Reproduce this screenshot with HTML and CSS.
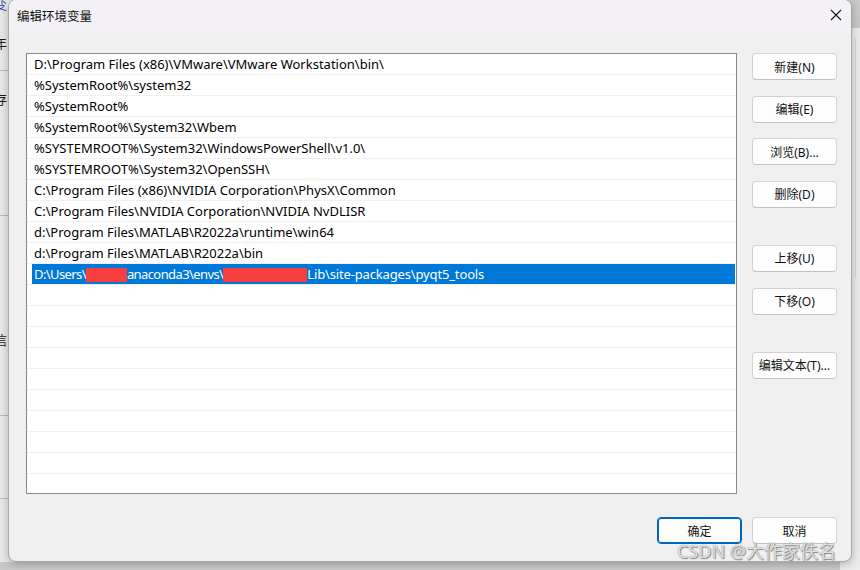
FILE: index.html
```html
<!DOCTYPE html>
<html lang="zh">
<head>
<meta charset="utf-8">
<title>编辑环境变量</title>
<link rel="stylesheet" href="styles.css">
</head>
<body>
<div class="desktop">
  <div class="behind">
    <div class="behind-left">
      <span class="frag f1">变</span>
      <span class="frag f2">年</span>
      <span class="frag f3">存</span>
      <span class="frag f4">信</span>
      <i class="bline l1"></i><i class="bline l2"></i><i class="bline l3"></i><i class="bline l4"></i>
    </div>
    <div class="behind-right"><i class="rline"></i></div>
  </div>

  <div class="dialog">
    <div class="titlebar">
      <span class="title">编辑环境变量</span>
      <svg class="close" width="12" height="12" viewBox="0 0 12 12"><path d="M1 1 L11 11 M11 1 L1 11" stroke="#1a1a1a" stroke-width="1.1" fill="none"/></svg>
    </div>
    <div class="content">
      <div class="main">
        <div class="listbox">
          <div class="row"><span class="txt">D:\Program Files (x86)\VMware\VMware Workstation\bin\</span></div>
          <div class="row"><span class="txt">%SystemRoot%\system32</span></div>
          <div class="row"><span class="txt">%SystemRoot%</span></div>
          <div class="row"><span class="txt">%SystemRoot%\System32\Wbem</span></div>
          <div class="row"><span class="txt">%SYSTEMROOT%\System32\WindowsPowerShell\v1.0\</span></div>
          <div class="row"><span class="txt">%SYSTEMROOT%\System32\OpenSSH\</span></div>
          <div class="row"><span class="txt">C:\Program Files (x86)\NVIDIA Corporation\PhysX\Common</span></div>
          <div class="row"><span class="txt">C:\Program Files\NVIDIA Corporation\NVIDIA NvDLISR</span></div>
          <div class="row"><span class="txt">d:\Program Files\MATLAB\R2022a\runtime\win64</span></div>
          <div class="row"><span class="txt">d:\Program Files\MATLAB\R2022a\bin</span></div>
          <div class="row selected"><span class="txt"><span class="tight">D:\Users\</span><span class="redact r1"></span><span class="tight">anaconda3\envs\</span><span class="redact r2"></span>Lib\site-packages\pyqt5_tools</span></div>
          <div class="row"></div><div class="row"></div><div class="row"></div><div class="row"></div><div class="row"></div>
          <div class="row"></div><div class="row"></div><div class="row"></div><div class="row"></div><div class="row"></div>
        </div>
        <div class="side">
          <button class="btn">新建(N)</button>
          <button class="btn">编辑(E)</button>
          <button class="btn">浏览(B)...</button>
          <button class="btn">删除(D)</button>
          <button class="btn group">上移(U)</button>
          <button class="btn">下移(O)</button>
          <button class="btn group">编辑文本(T)...</button>
        </div>
      </div>
      <div class="footer">
        <button class="btn primary">确定</button>
        <button class="btn">取消</button>
      </div>
    </div>
  </div>

  <div class="watermark">CSDN @大作家佚名</div>
</div>
</body>
</html>
```

FILE: styles.css
```css
* { box-sizing: border-box; }
html, body { margin: 0; padding: 0; }
body {
  width: 860px;
  height: 570px;
  overflow: hidden;
  font-family: "Noto Sans", "Noto Sans CJK SC", sans-serif;
  font-size: 12px;
  color: #000;
}
.desktop {
  position: relative;
  width: 860px;
  height: 570px;
  background: #c9c9c9;
  overflow: hidden;
}
.behind { position: absolute; inset: 0; }
.behind-left {
  position: absolute;
  left: 0; top: 0;
  width: 30px; height: 562px;
  background: #e9e9e9;
}
.frag {
  position: absolute;
  left: -6px;
  font-family: "Noto Sans CJK SC", sans-serif;
  font-size: 13px;
  color: #1a1a1a;
}
.f1 { top: -6px; color: #2a4a9a; }
.f2 { top: 33px; }
.f3 { top: 89px; }
.f4 { top: 330px; }
.bline { position: absolute; left: 0; width: 8px; height: 1px; background: #bdbdbd; }
.l1 { top: 70px; } .l2 { top: 215px; } .l3 { top: 415px; } .l4 { top: 498px; }
.behind-right {
  position: absolute;
  right: 0; top: 28px;
  width: 20px; height: 542px;
  background: #ececec;
}
.rline { position: absolute; left: 15px; top: 10px; width: 1px; height: 240px; background: #d6d6d6; }

.dialog {
  position: absolute;
  left: 8px; top: -1px;
  width: 844px;
  height: 563px;
  background: #f0f0f0;
  border: 1px solid #a8a8a8;
  border-radius: 8px;
  box-shadow: 0 2px 10px rgba(0,0,0,0.25);
  overflow: hidden;
  display: flex;
  flex-direction: column;
}
.titlebar {
  height: 32px;
  flex: none;
  background: #f3f1f6;
  display: flex;
  align-items: center;
  justify-content: space-between;
  padding: 0 9px 2px 8px;
}
.title {
  font-family: "Noto Sans CJK SC", sans-serif;
  font-size: 12.5px;
  color: #111;
}
.content {
  flex: 1;
  display: flex;
  flex-direction: column;
  padding: 21px 14px 17px 17px;
}
.main { display: flex; gap: 15px; }
.listbox {
  width: 711px;
  height: 441px;
  border: 1px solid #868a92;
  background: #fff;
  overflow: hidden;
  padding-left: 5px;
}
.row {
  height: 21px;
  border-bottom: 1px solid #f0f0f0;
  margin-left: -5px;
  padding-left: 5px;
  display: flex;
  align-items: center;
  white-space: nowrap;
}
.row .txt {
  flex: 1;
  height: 20px;
  line-height: 21px;
  padding-left: 2px;
  margin-right: 1px;
  font-size: 13px;
  color: #000;
}
.row.selected .txt { background: #0078d7; color: #fff; letter-spacing: -0.15px; }
.row.selected .tight { letter-spacing: -0.6px; }
.redact {
  display: inline-block;
  height: 14px;
  vertical-align: -3px;
  background: #f83e3e;
}
.r1 { width: 41px; }
.r2 { width: 84px; }

.side {
  display: flex;
  flex-direction: column;
  gap: 15.67px;
}
.btn {
  width: 85px;
  height: 27px;
  background: #fdfdfd;
  border: 1px solid #d2d2d2;
  border-bottom-color: #c2c2c2;
  border-radius: 4px;
  font-family: "Noto Sans", "Noto Sans CJK SC", sans-serif;
  font-size: 12px;
  color: #111;
  padding: 0;
  text-align: center;
}
.btn.group { margin-top: 21.33px; }
.footer {
  margin-top: auto;
  display: flex;
  justify-content: flex-end;
  gap: 10px;
}
.btn.primary {
  border: 1px solid #0067c0;
  box-shadow: inset 0 0 0 1px #0067c0;
}
.watermark {
  position: absolute;
  left: 677px;
  top: 537px;
  font-family: "Noto Sans", "Noto Sans CJK SC", sans-serif;
  font-size: 18px;
  color: rgba(255,255,255,0.75);
  text-shadow: 0 0 1px #777, 1px 1px 1px #888;
  white-space: nowrap;
}
```
